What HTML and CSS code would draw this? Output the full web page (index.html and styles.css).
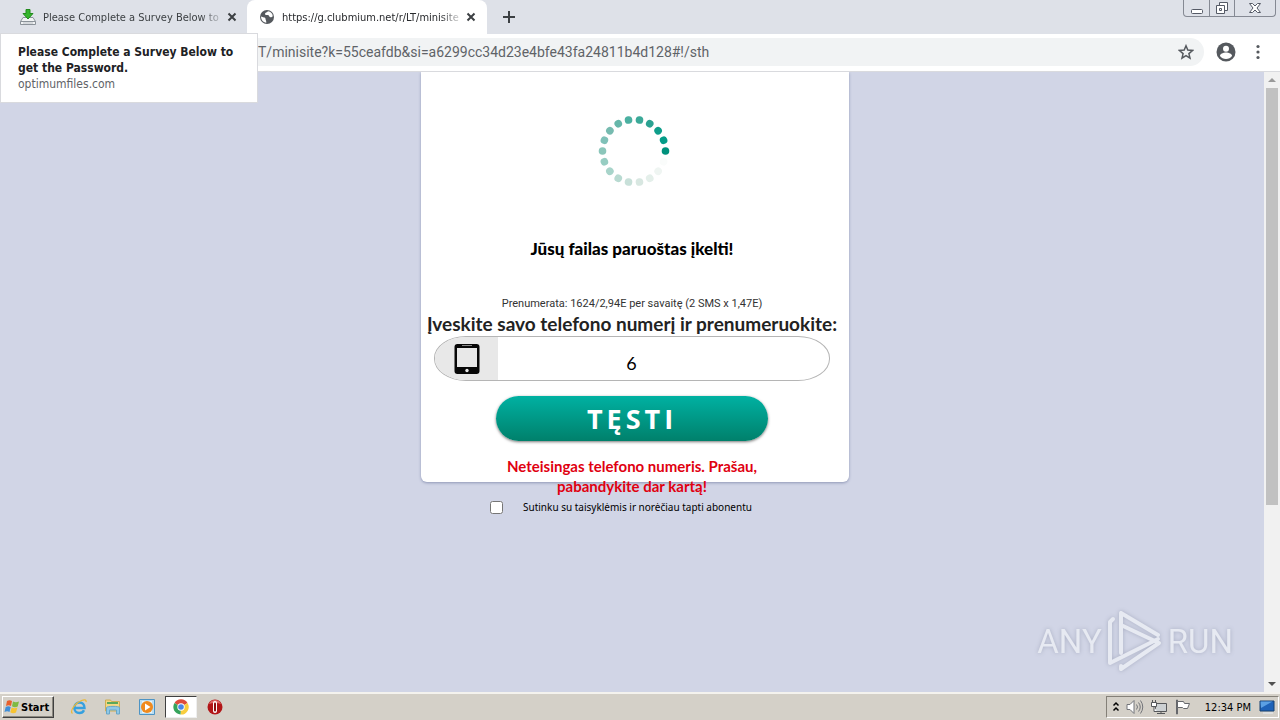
FILE: index.html
```html
<!DOCTYPE html>
<html lang="lt">
<head>
<meta charset="utf-8">
<meta name="viewport" content="width=device-width, initial-scale=1">
<title>Minisite</title>
<link rel="stylesheet" href="styles.css">
</head>
<body>
<div class="screen">
  <header class="browser">
    <div class="tabs">
      <div class="tab">
        <svg class="icon16" viewBox="0 0 16 16" aria-hidden="true"><path d="M3 8.500h10l2.500 4v3H.5v-3z" fill="#f1f3f4" stroke="#8b9299"/><path d="M.5 12.500h15" stroke="#8b9299"/><path d="M3 14h10" stroke="#b9bec4"/><path d="M6 .5h4v4h3L8 10 3 4.500h3z" fill="#35b52c" stroke="#228a1d"/></svg>
        <span class="tab-title">Please Complete a Survey Below to</span>
        <button class="tab-close" aria-label="Close tab"><svg viewBox="0 0 10 10"><path d="M1.500 1.500l7 7M8.500 1.500l-7 7"/></svg></button>
      </div>
      <div class="tab tab-active">
        <svg class="icon16" viewBox="0 0 16 16" aria-hidden="true"><circle cx="8" cy="8" r="7" fill="#55595e"/><path d="M2 7.500c2 1.200 4.500.5 4.500 2.300 0 1.500.8 1.200.8 3.900C4 13.500 2 10.500 2 7.500zM9 2.200c-.8 1.200-3 1-3 2.700 0 1.300 1.800.8 3 1.200 1.500.5 1 2.200 2.600 2.200 1.200 0 1.400-.8 2.200-.8C13.800 4.600 11.800 2.500 9 2.200z" fill="#fff"/></svg>
        <span class="tab-title">https://g.clubmium.net/r/LT/minisite</span>
        <button class="tab-close" aria-label="Close tab"><svg viewBox="0 0 10 10"><path d="M1.500 1.500l7 7M8.500 1.500l-7 7"/></svg></button>
      </div>
      <button class="new-tab" aria-label="New tab"><svg viewBox="0 0 12 12"><path d="M6 0v12M0 6h12"/></svg></button>
      <div class="window-buttons">
        <button aria-label="Minimize"><svg width="14" height="14" viewBox="0 0 14 14"><rect x="1.500" y="8.500" width="11" height="4" rx="1"/></svg></button>
        <button aria-label="Restore"><svg width="14" height="14" viewBox="0 0 14 14"><path d="M4.500 4V1.500h8v8H10"/><path d="M1.500 4.500h8v8h-8z"/><path d="M4.500 7.500h2v2h-2z"/></svg></button>
        <button class="wide" aria-label="Close"><svg width="14" height="14" viewBox="0 0 14 14"><path d="M1.500 2.500h3L7 5l2.500-2.500h3L9 7l3.500 4.500h-3L7 9l-2.500 2.500h-3L5 7z"/></svg></button>
      </div>
    </div>
    <div class="toolbar">
      <div class="omnibox">
        <input class="address" type="text" aria-label="Address" value="T/minisite?k=55ceafdb&amp;si=a6299cc34d23e4bfe43fa24811b4d128#!/sth">
        <button class="plain" aria-label="Bookmark"><svg width="16" height="16" viewBox="0 0 16 16"><path d="M8 1.800l1.800 4.300 4.700.4-3.600 3.100 1.100 4.600L8 11.700l-4 2.500 1.100-4.600-3.600-3.100 4.700-.4z" fill="none" stroke="#55595e" stroke-width="1.500"/></svg></button>
      </div>
      <button class="plain" aria-label="Profile"><svg width="20" height="20" viewBox="0 0 20 20"><circle cx="10" cy="10" r="9.500" fill="#55595e"/><circle cx="10" cy="6.800" r="3" fill="#fff"/><path d="M4 14c0-2.200 3.500-3.400 6-3.400s6 1.200 6 3.400c-1.300 1.900-3.500 3-6 3s-4.700-1.100-6-3z" fill="#fff"/></svg></button>
      <button class="plain" aria-label="Menu"><svg width="16" height="16" viewBox="0 0 16 16" fill="#55595e"><circle cx="8" cy="2.500" r="1.600"/><circle cx="8" cy="8" r="1.600"/><circle cx="8" cy="13.500" r="1.600"/></svg></button>
    </div>
    <div class="tooltip" role="tooltip">
      <strong>Please Complete a Survey Below to get the Password.</strong>
      <span>optimumfiles.com</span>
    </div>
  </header>

  <div class="viewport">
    <main class="page">
      <form class="panel">
        <svg class="loader" width="72" height="72" viewBox="-36 -36 72 72" role="img" aria-label="Kraunama">
          <g fill="#00917c">
            <circle cx="31.500" cy="0" r="3.800"/>
            <circle cx="31.500" cy="0" r="3.800" transform="rotate(-20)" fill="#049c88"/>
            <circle cx="31.500" cy="0" r="3.800" transform="rotate(-40)" fill="#0f9e8b"/>
            <circle cx="31.500" cy="0" r="3.800" transform="rotate(-60)" fill="#2ba292"/>
            <circle cx="31.500" cy="0" r="3.800" transform="rotate(-80)" fill="#3ba998"/>
            <circle cx="31.500" cy="0" r="3.800" transform="rotate(-100)" fill="#4bb0a1"/>
            <circle cx="31.500" cy="0" r="3.800" transform="rotate(-120)" fill="#66b7aa"/>
            <circle cx="31.500" cy="0" r="3.800" transform="rotate(-140)" fill="#77bbb0"/>
            <circle cx="31.500" cy="0" r="3.800" transform="rotate(-160)" fill="#80c1b8"/>
            <circle cx="31.500" cy="0" r="3.800" transform="rotate(180)" fill="#8bc6ba"/>
            <circle cx="31.500" cy="0" r="3.800" transform="rotate(160)" fill="#97cdc2"/>
            <circle cx="31.500" cy="0" r="3.800" transform="rotate(140)" fill="#a8d4ca"/>
            <circle cx="31.500" cy="0" r="3.800" transform="rotate(120)" fill="#b8dad1"/>
            <circle cx="31.500" cy="0" r="3.800" transform="rotate(100)" fill="#c8e0d9"/>
            <circle cx="31.500" cy="0" r="3.800" transform="rotate(80)" fill="#d8e7e1"/>
            <circle cx="31.500" cy="0" r="3.800" transform="rotate(60)" fill="#e4efea"/>
            <circle cx="31.500" cy="0" r="3.800" transform="rotate(40)" fill="#eff5f2"/>
            <circle cx="31.500" cy="0" r="3.800" transform="rotate(20)" fill="#fafcfb"/>
          </g>
        </svg>
        <h1 class="title">Jūsų failas paruoštas įkelti!</h1>
        <p class="price">Prenumerata: 1624/2,94E per savaitę (2 SMS x 1,47E)</p>
        <label class="prompt" for="phone">Įveskite savo telefono numerį ir prenumeruokite:</label>
        <div class="phone-field">
          <span class="phone-icon"><svg width="26" height="32" viewBox="0 0 26 32" aria-hidden="true"><rect x=".5" y="1" width="25" height="30" rx="3" fill="#080808"/><path d="M3 5h20v19H3z" fill="#e8e8e8"/><path d="M8 2.500h10" stroke="#888"/><circle cx="13" cy="27.500" r="1.700" fill="#e8e8e8"/></svg></span>
          <input id="phone" class="phone" type="tel" value="6">
        </div>
        <button class="submit" type="button">TĘSTI</button>
        <p class="error">Neteisingas telefono numeris. Prašau, pabandykite dar kartą!</p>
        <div class="consent">
          <input type="checkbox" id="agree">
          <label for="agree">Sutinku su taisyklėmis ir norėčiau tapti abonentu</label>
        </div>
      </form>
      <div class="watermark">
        <span>ANY</span>
        <svg width="56" height="62" viewBox="0 0 56 62" fill="none" stroke="#e7eaf2" stroke-width="4" stroke-linejoin="round" stroke-linecap="round" aria-hidden="true"><path d="M6 9L3 12v41l8-4 40-20"/><path d="M51 25L14 3v40"/><path d="M14 15l38 18-38 26v-3"/></svg>
        <span>RUN</span>
      </div>
    </main>
    <div class="scrollbar" aria-hidden="true">
      <svg width="16" height="16" viewBox="0 0 16 16"><path d="M4 10l4-4 4 4z" fill="#9a9a9a"/></svg>
      <div class="track"><div class="thumb"></div></div>
      <svg width="16" height="16" viewBox="0 0 16 16"><path d="M4 6l4 4 4-4z" fill="#505050"/></svg>
    </div>
  </div>

  <footer class="taskbar">
    <button class="start"><svg width="16" height="16" viewBox="0 0 16 16" aria-hidden="true"><path d="M3 2c2-1.200 3.500-.8 5 0L7 7c-1.500-.8-3-1-5 0z" fill="#e8602c"/><path d="M9 2.500c2 1 3.500 1 6 0l-1.300 5c-2 1-4 .8-5.700-.2z" fill="#7fba42"/><path d="M1.700 8c2-1 3.500-.8 5 0l-1.200 5c-1.500-.8-3-.9-5 0z" fill="#3f8ed8"/><path d="M7.700 8.400c2 1 3.700 1 5.700 0L12 13.500c-2 1-4 .8-5.700-.2z" fill="#f7c331"/></svg>Start</button>
    <nav class="launch">
      <button aria-label="Internet Explorer"><svg width="18" height="18" viewBox="0 0 18 18" fill="none"><path d="M4.500 10h10c0-3.500-2.200-5.500-5-5.500S4.300 6.700 4.300 10c0 3 2.300 5 5 5 2.200 0 3.900-1 4.700-2.800" stroke="#35a0df" stroke-width="2.400"/><path d="M2.500 15.500C-.5 13 5 5 11.500 2.500c3-1.200 5-.8 4.500 1.500" stroke="#eab83a" stroke-width="1.300"/></svg></button>
      <button aria-label="Explorer"><svg width="18" height="18" viewBox="0 0 18 18"><path d="M1.500 4V2h5l1 1.500h8V13h-14z" fill="#f3d783" stroke="#cfae55"/><path d="M3 5h11" stroke="#5aa85a" stroke-width="2"/><path d="M2.500 16V9.500c0-1.500 13-1.500 13 0V16h-3v-4h-7v4z" fill="#8fc8e6" stroke="#69a6c8"/></svg></button>
      <button aria-label="Media Player"><svg width="18" height="18" viewBox="0 0 18 18"><path d="M1.500 1.500h15v15h-15z" fill="#b9ddf2" stroke="#4e94c4"/><path d="M4 3h10v12H4z" fill="#e6f4fb"/><circle cx="9" cy="9" r="6" fill="#f08a1d"/><path d="M7 5.500L12.500 9 7 12.500z" fill="#fff"/></svg></button>
      <button class="running" aria-label="Chrome"><svg width="16" height="16" viewBox="0 0 16 16"><path d="M8 8L1.500 4A7.500 7.500 0 0 1 14.500 4z" fill="#de4c3c"/><path d="M8 8l6.500-4A7.500 7.500 0 0 1 7.500 15.500z" fill="#f8cd3e"/><path d="M8 8l-.5 7.500A7.500 7.500 0 0 1 1.500 4z" fill="#36a35b"/><circle cx="8" cy="8" r="3.700" fill="#fff"/><circle cx="8" cy="8" r="2.800" fill="#4a87e8"/></svg></button>
      <button aria-label="Opera"><svg width="18" height="18" viewBox="0 0 18 18"><circle cx="9" cy="9" r="7.500" fill="#b21517"/><path d="M3 6a6.500 6.500 0 0 1 12 0c-3-1.500-9-1.500-12 0z" fill="#df6464"/><rect x="7" y="3" width="4" height="12" rx="2" fill="#fff"/><rect x="8" y="4.500" width="2" height="9" rx="1" fill="#8d0e10"/></svg></button>
    </nav>
    <div class="tray">
      <svg width="8" height="12" viewBox="0 0 8 12" fill="none" stroke="#000" stroke-width="1.500" aria-hidden="true"><path d="M1.500 4.500L4 2l2.500 2.500M1.500 9.500L4 7l2.500 2.500"/></svg>
      <svg width="18" height="16" viewBox="0 0 18 16" fill="none" stroke="#73757a" aria-hidden="true"><path d="M1 5.500h3l4-4v13l-4-4H1z" fill="#fff"/><path d="M10.500 5.500q2 2.500 0 5M12.500 3.500q3.500 4.500 0 9M14.500 1.500q4.500 6.500 0 13"/></svg>
      <svg width="18" height="16" viewBox="0 0 18 16" fill="#fff" stroke="#55575a" aria-hidden="true"><path d="M5.500 4.500h11v8h-11z" fill="#ccd0d2"/><path d="M7 14.500h8M11 12.500v2"/><path d="M1.500 3.500h5v4h-5zM2.500 1v2.500M5.500 1v2.500M4 7.500v5h3"/></svg>
      <svg width="18" height="16" viewBox="0 0 18 16" fill="#fff" stroke="#66686c" aria-hidden="true"><path d="M2.500 1v14h1V1z"/><path d="M3.500 2.500h6l1 2h5l-2 5H9.500l-1-1h-5z"/></svg>
      <time>12:34 PM</time>
      <svg width="16" height="14" viewBox="0 0 16 14" aria-hidden="true"><path d="M1 1h14v10H1z" fill="#1e62b8" stroke="#17406f"/><path d="M1.500 1.500h12L2 8z" fill="#5ba0e4"/><path d="M4 13h10" stroke="#e7edf4"/></svg>
    </div>
  </footer>
</div>
</body>
</html>
```
FILE: styles.css
```css
* { box-sizing: border-box; }
body {
  margin: 0;
  font-family: "DejaVu Sans Condensed", "DejaVu Sans", sans-serif;
  font-size: 11px;
  color: #000;
}
button { border: 0; padding: 0; background: none; font: inherit; color: inherit; }
svg { display: block; flex: none; }
h1, p { margin: 0; }
.screen { display: flex; flex-direction: column; height: 100vh; overflow: hidden; }

.browser { position: relative; flex: none; }
.tabs { display: flex; height: 34px; background: #dee1e8; }
.tab { display: flex; align-items: center; width: 247px; padding: 0 8px 0 20px; color: #3c4043; }
.tab-active { width: 240px; padding-left: 12px; padding-right: 9px; background: #fff; border-radius: 8px 8px 0 0; color: #27292c; }
.icon16 { width: 16px; height: 16px; margin-right: 7px; }
.tab-title {
  flex: 1;
  min-width: 0;
  overflow: hidden;
  white-space: nowrap;
  -webkit-mask-image: linear-gradient(to left, transparent, #000 24px);
  mask-image: linear-gradient(to left, transparent, #000 24px);
}
.tab-close { display: grid; place-items: center; width: 14px; height: 16px; }
.tab-close svg { width: 10px; height: 10px; stroke: #3c4043; stroke-width: 2; }
.new-tab { width: 44px; display: grid; place-items: center; }
.new-tab svg { width: 12px; height: 12px; stroke: #3c4043; stroke-width: 2; }
.window-buttons { display: flex; height: 17px; margin: 0 4px 0 auto; border: 1px solid #858993; border-top: 0; border-radius: 0 0 4px 4px; }
.window-buttons button { width: 25px; display: grid; place-items: center; }
.window-buttons button + button { border-left: 1px solid #858993; }
.window-buttons .wide { width: 41px; }
.window-buttons svg { fill: #fff; stroke: #555a66; }

.toolbar { display: flex; align-items: center; gap: 14px; height: 38px; padding: 0 14px 2px 120px; background: #fff; border-bottom: 1px solid #d9dade; }
.omnibox { flex: 1; display: flex; align-items: center; height: 28px; padding-right: 10px; margin-right: -2px; background: #f1f3f4; border-radius: 14px; }
.address { flex: 1; min-width: 0; border: 0; padding: 0 0 0 138px; background: none; color: #5f6368; font-family: Roboto, sans-serif; font-size: 14px; }
.tooltip { position: absolute; left: 0; top: 33px; z-index: 2; width: 258px; padding: 10px 17px; background: #fff; border: 1px solid #d9dade; line-height: 16px; color: #5f6368; font-size: 12px; }
.tooltip strong { display: block; color: #202124; }

.viewport { flex: 1; min-height: 0; display: flex; }
.page { position: relative; flex: 1; overflow: hidden; background: #d1d5e6; }
.panel {
  position: relative;
  display: flex;
  flex-direction: column;
  align-items: center;
  width: 428px;
  margin: 0 auto;
  padding-top: 43px;
  font-family: "Noto Sans", sans-serif;
  text-align: center;
}
.panel::before { content: ""; position: absolute; inset: 0 -3px 36px 3px; background: #fff; border-radius: 0 0 6px 6px; box-shadow: 0 1px 3px #8e96b5; }
.panel > * { position: relative; }
.loader { margin-left: 4px; }
.title { margin-top: 50px; font-family: Lato, sans-serif; font-size: 17px; line-height: 24px; font-weight: 900; }
.price { margin-top: 35px; font-family: Roboto, sans-serif; font-size: 11px; line-height: 16px; color: #333; }
.prompt { font-family: Lato, sans-serif; font-size: 19px; line-height: 24px; font-weight: 700; white-space: nowrap; color: #222; }
.phone-field { display: flex; width: 396px; height: 45px; overflow: hidden; border: 1px solid #b5b5b5; border-radius: 32px / 22px; background: #fff; }
.phone-icon { display: grid; place-items: center; width: 63px; background: #e8e8e8; }
.phone { flex: 1; min-width: 0; border: 0; padding: 8px 64px 0 0; background: none; text-align: center; font-family: Lato, sans-serif; font-size: 18px; }
.submit { width: 272px; height: 45px; margin-top: 15px; border-radius: 23px; background: linear-gradient(#00b1a2, #00806b); box-shadow: 0 1px 3px #777; color: #fff; font-family: "Open Sans", sans-serif; font-size: 27px; font-weight: 700; letter-spacing: 4px; }
.error { width: 270px; margin-top: 15px; color: #e00010; font-family: Lato, sans-serif; font-size: 15px; line-height: 20px; font-weight: 700; }
.consent { display: flex; align-items: center; gap: 20px; width: 284px; height: 22px; font-size: 10px; }
.consent input { width: 13px; height: 13px; margin: 0; }

.watermark { position: absolute; right: 31px; bottom: 20px; display: flex; align-items: center; gap: 5px; font-family: Roboto, sans-serif; font-size: 33px; color: #e7eaf2; filter: drop-shadow(0 0 2px #a9aec2); }

.scrollbar { display: flex; flex-direction: column; width: 16px; background: #f1f1f1; }
.track { flex: 1; padding: 0 2px; }
.thumb { height: 71%; background: #c1c1c1; }

.taskbar { display: flex; align-items: center; flex: none; height: 28px; padding: 0 1px 0 2px; background: #d4d0c8; border-top: 2px solid #f4f2ee; }
.start { display: flex; align-items: center; gap: 1px; height: 22px; width: 52px; padding-left: 1px; font-weight: 700; border: 1px solid; border-color: #fff #404040 #404040 #fff; box-shadow: inset -1px -1px #8b8880; }
.launch { display: flex; margin-left: 9px; gap: 2px; }
.launch button { display: grid; place-items: center; width: 32px; height: 22px; }
.launch .running { background: #fff; border: 1px solid; border-color: #404040 #eee #eee #404040; }
.tray { display: flex; align-items: center; gap: 6px; height: 22px; margin-left: auto; padding: 0 3px 0 5px; border: 1px solid; border-color: #848078 #fff #fff #848078; }
.tray time { margin: 0 2px 0 7px; }
```
